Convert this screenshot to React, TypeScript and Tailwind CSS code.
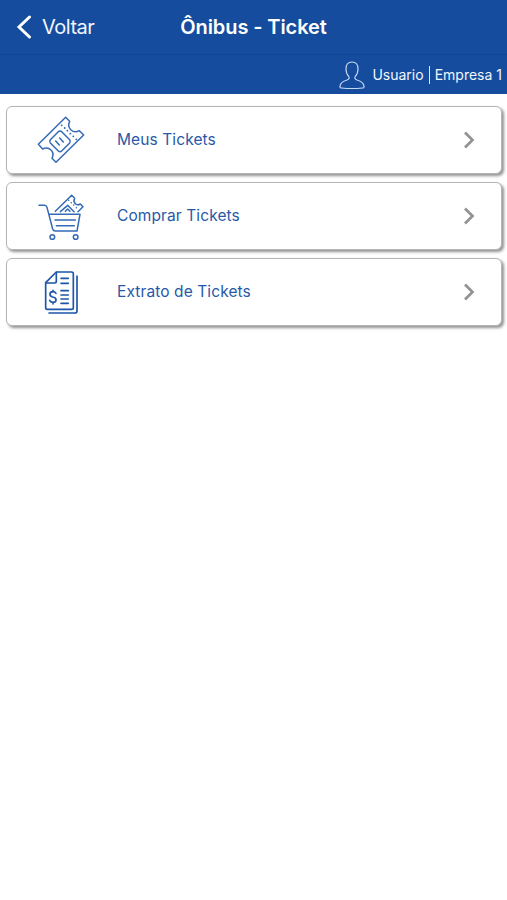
import { ReactNode } from "react";

interface MenuItemProps {
  icon: ReactNode;
  label: string;
  labelClassName: string;
}

const TicketIcon = () => (
  <svg viewBox="0 0 192 180" className="h-[60px] w-16" fill="none" stroke="#356ab5" strokeWidth="4.5" strokeLinejoin="round" strokeLinecap="round">
    <path d="M25 103 107 22l12 12c-5 10-3 19 4 26 7 6 16 7 25 2l13 13-83 82-12-12c5-10 3-19-3-25-7-7-16-8-25-3Z" />
    <path d="M85 65q5-4 10 0l24 24q4 5 0 10l-24 24q-5 4-10 0L61 99q-4-5 0-10Z" />
    <path d="m77 93 11 12M89 84l11 12" />
    <path d="M95 46h.1M104 54h.1M112 62h.1M121 71h.1M130 79h.1M139 88h.1" strokeWidth="5.5" />
  </svg>
);

const CartIcon = () => (
  <svg viewBox="0 0 192 180" className="h-[60px] w-16" fill="none" stroke="#356ab5" strokeWidth="4.5" strokeLinejoin="round" strokeLinecap="round">
    <path d="M27 58h17q5 0 7 6l17 65q2 6 8 6h65l9-50H59" />
    <path d="M75 102h61M79 119h54" />
    <circle cx="67" cy="153" r="7" />
    <circle cx="137" cy="153" r="7" />
    <path d="m76 76 49-48 9 9c-4 7-2 12 2 16s10 4 15 1l8 8-15 15" />
    <path d="m91 77 22-19 19 19M106 76l7-7 7 7M116 43h.1M124 50h.1M131 57h.1M139 65h.1" />
  </svg>
);

const StatementIcon = () => (
  <svg viewBox="0 0 192 180" className="h-[60px] w-16" fill="none" stroke="#1d55a8" strokeWidth="5" strokeLinejoin="round" strokeLinecap="round">
    <path d="M79 30h46q5 0 5 5v102q0 5-5 5H52q-5 0-5-5V62Z" />
    <path d="M79 31v27q0 5-5 5H48" />
    <path d="M141 42v104q0 7-7 7H57" />
    <path d="M93 49h22M93 64h22M93 86h22M93 99h22M93 111h22M93 124h22" />
    <path d="M78 94q-3-5-9-5c-12 0-12 14-1 16 14 2 13 16 0 16q-7 0-9-6M69 85v4M69 121v5" />
  </svg>
);

const UserIcon = () => (
  <svg viewBox="0 0 78 84" className="h-7 w-[26px]" fill="none" stroke="#c5d8f3" strokeWidth="3.5" strokeLinejoin="round">
    <path d="M29 46c-6-6-8-14-8-22 0-13 6-21 18-21s18 8 18 21c0 8-2 16-8 22-3 5-1 9 5 11 14 4 20 9 21 19 1 3-1 5-5 5-18 2-44 2-62 0-4 0-6-2-5-5 1-10 7-15 21-19 6-2 8-6 5-11Z" />
  </svg>
);

const MenuItem = ({ icon, label, labelClassName }: MenuItemProps) => (
  <button className="flex h-[68px] w-full items-center rounded-[6px] border border-[#b5b5b5] bg-white pl-[23px] pr-[26px] shadow-[2px_2px_3px_#929292]">
    {icon}
    <span className={`ml-[23px] flex-1 text-left text-[15.5px] text-[#2859a8] ${labelClassName}`}>{label}</span>
    <svg viewBox="0 0 12 18" className="h-[18px] w-3" fill="none" stroke="#929292" strokeWidth="2.7">
      <path d="m2 1.5 7.5 7.5L2 16.5" />
    </svg>
  </button>
);

export default function App() {
  return (
    <div className="min-h-screen w-full bg-white font-['Inter',sans-serif]">
      <header className="bg-[#154c9e] text-[#f1f6ff]">
        <div className="grid h-[55px] grid-cols-[1fr_auto_1fr] items-center border-b border-[#124591]">
          <button className="flex items-center pl-4">
            <svg viewBox="0 0 16 24" className="h-6 w-4" fill="none" stroke="white" strokeWidth="3" strokeLinecap="round">
              <path d="M13.5 2 3 12l10.5 10" />
            </svg>
            <span className="ml-[10px] text-[20px] tracking-[-0.5px]">Voltar</span>
          </button>
          <h1 className="text-[20px] font-semibold tracking-[-0.1px] text-white">Ônibus - Ticket</h1>
        </div>
        <div className="flex h-[39px] items-center justify-end pr-[5px]">
          <UserIcon />
          <span className="ml-[7px] text-[14px]">Usuario</span>
          <span className="mx-[5px] h-[18px] w-px bg-[#dce8fa]" />
          <span className="text-[14px]">Empresa 1</span>
        </div>
      </header>
      <main className="flex flex-col gap-2 pl-[6px] pr-[5px] pt-3">
        <MenuItem icon={<TicketIcon />} label="Meus Tickets" labelClassName="tracking-[0.1px]" />
        <MenuItem icon={<CartIcon />} label="Comprar Tickets" labelClassName="tracking-[0.1px]" />
        <MenuItem icon={<StatementIcon />} label="Extrato de Tickets" labelClassName="tracking-[0.1px]" />
      </main>
    </div>
  );
}
